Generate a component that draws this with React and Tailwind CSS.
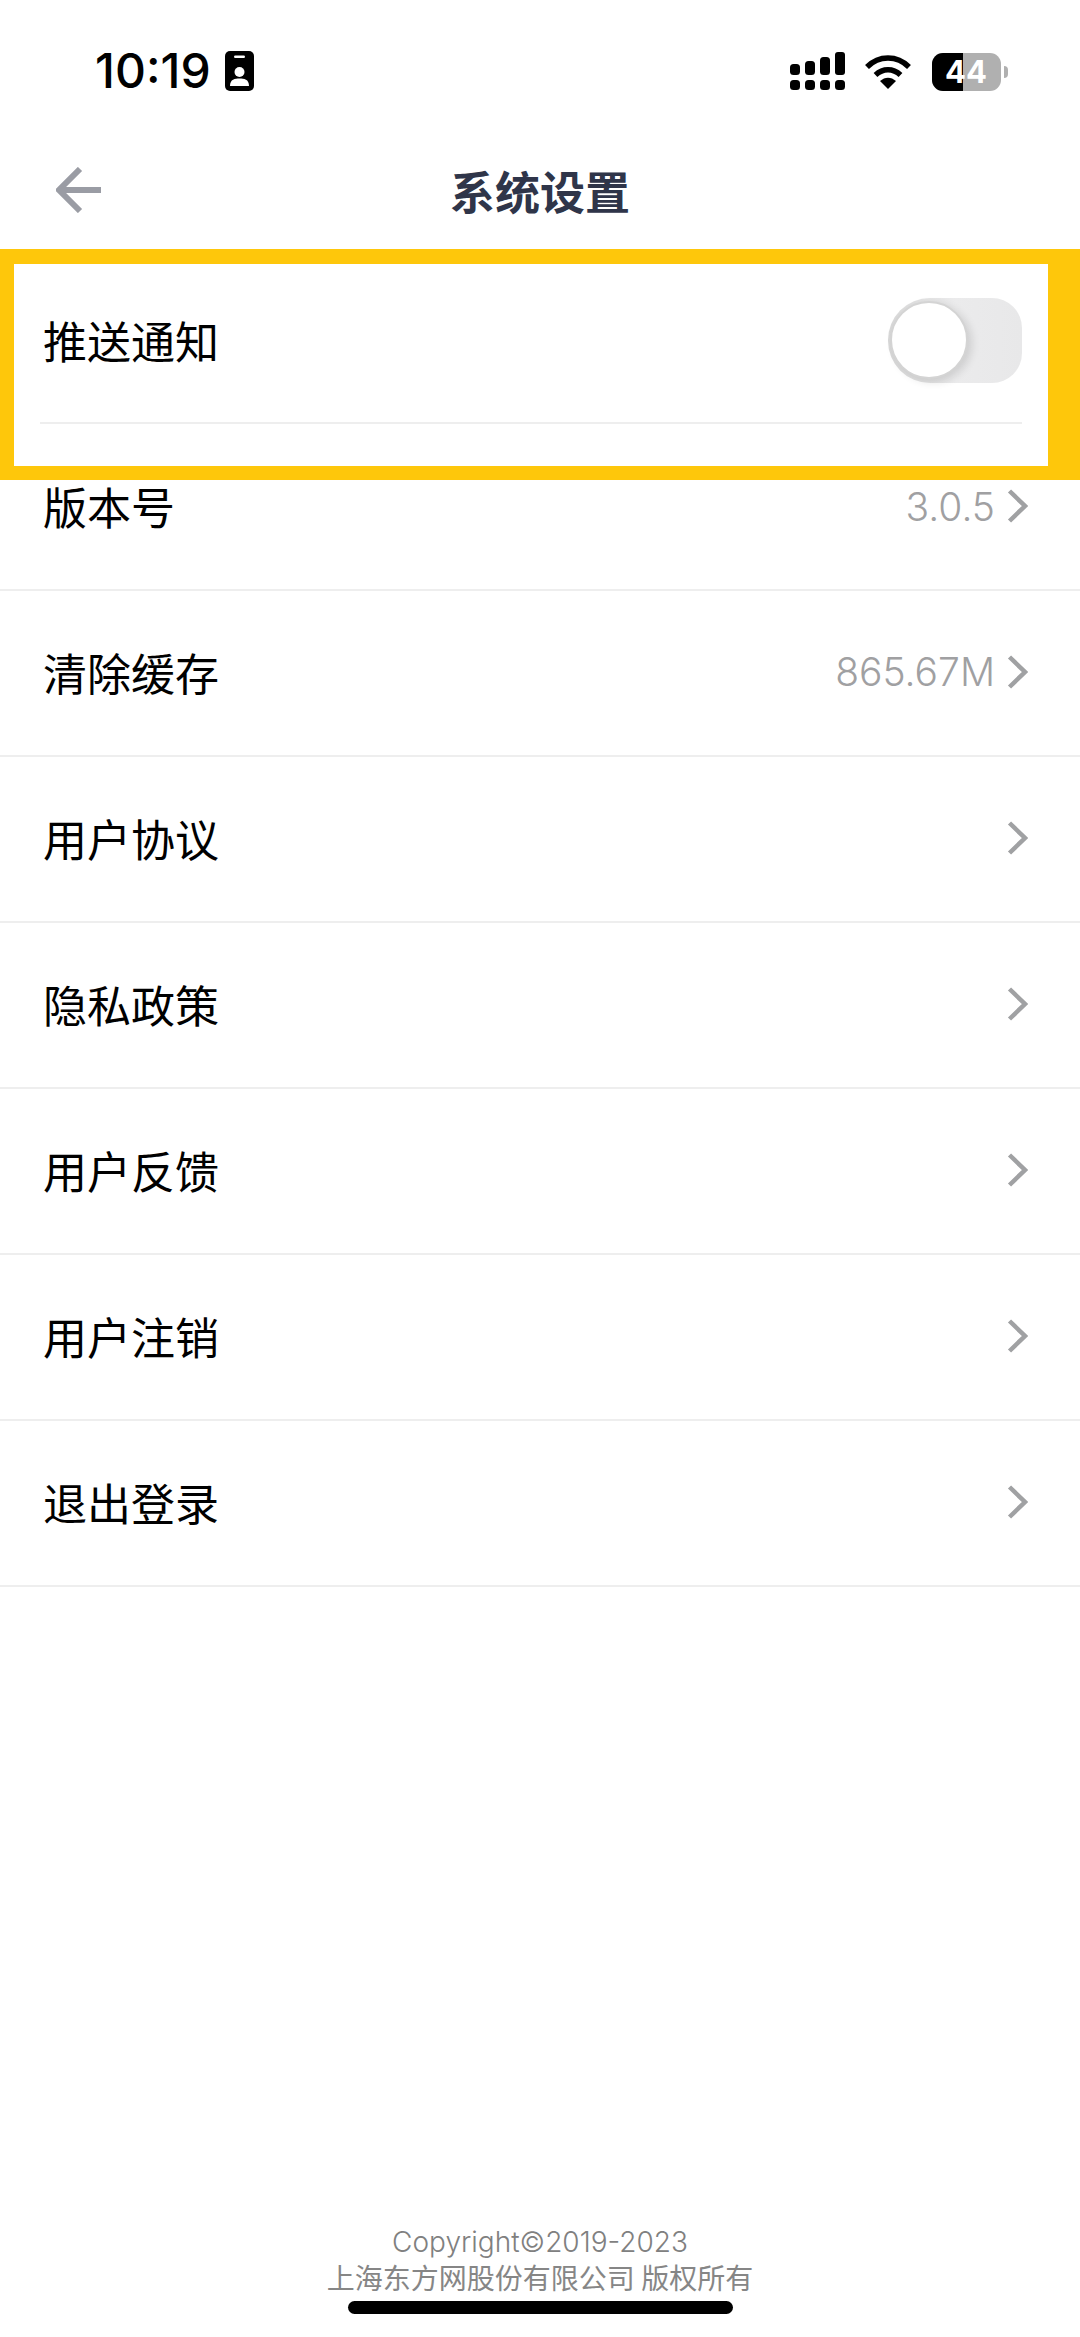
const LATIN = "font-['Inter','Noto_Sans_CJK_SC',sans-serif]";
const CJK = "font-['Noto_Sans_CJK_SC','Noto_Sans',sans-serif]";

function Chevron() {
  return (
    <svg width="21" height="34" viewBox="0 0 21 34" fill="none" className="shrink-0">
      <path d="M2.5 2 L18 17 L2.5 32" stroke="#a0a1a3" strokeWidth="4.5" />
    </svg>
  );
}

function Row({ label, value }) {
  return (
    <div className="h-[166px] flex items-center justify-between pl-[43px] pr-[52px] pb-[3px] border-b-2 border-[#eeeeee]">
      <span className={`${CJK} text-[44px] leading-none text-black`}>{label}</span>
      <div className="flex items-center gap-[12px]">
        {value && <span className={`${LATIN} text-[39px] leading-none font-light text-[#a0a0a2]`}>{value}</span>}
        <Chevron />
      </div>
    </div>
  );
}

function StatusBar() {
  return (
    <div className="h-[133px] shrink-0 flex items-start justify-between pl-[95px] pr-[72px] pt-[48px]">
      <div className="flex items-center gap-[14px]">
        <span className={`${LATIN} text-[48px] leading-[46px] font-medium text-black`}>10:19</span>
        <svg width="29" height="40" viewBox="0 0 29 40">
          <rect width="29" height="40" rx="5" fill="#000" />
          <rect x="9" y="4.5" width="11" height="2.5" rx="1.2" fill="#fff" />
          <circle cx="14.5" cy="21" r="5" fill="#fff" />
          <path d="M5 35 C5 28 10 27.5 14.5 27.5 C19 27.5 24 28 24 35 Z" fill="#fff" />
        </svg>
      </div>
      <div className="flex items-center pt-[4px]">
        <svg width="55" height="39" viewBox="0 0 55 39" fill="#000">
          <rect x="0" y="12" width="10" height="11" rx="3.5" />
          <rect x="15" y="9" width="10" height="14" rx="3.5" />
          <rect x="30" y="5" width="10" height="18" rx="3.5" />
          <rect x="45" y="0" width="10" height="23" rx="3" />
          <rect x="0" y="28" width="10" height="10" rx="3.5" />
          <rect x="15" y="28" width="10" height="10" rx="3.5" />
          <rect x="30" y="28" width="10" height="10" rx="3.5" />
          <rect x="45" y="28" width="10" height="10" rx="3.5" />
        </svg>
        <svg width="46" height="36" viewBox="0 0 46 36" fill="none" className="ml-[20px]">
          <path d="M2 13 C14 1 32 1 44 13" stroke="#000" strokeWidth="5.5" />
          <path d="M10.5 21 C18 14 28 14 35.5 21" stroke="#000" strokeWidth="5.5" />
          <path d="M15 27 L23 35 L31 27 C26 22.5 20 22.5 15 27 Z" fill="#000" />
        </svg>
        <div className="relative ml-[21px] w-[69px] h-[38px] rounded-[11px] overflow-hidden bg-[#b0b0b0]">
          <div className="w-[31px] h-full bg-black" />
          <span className="absolute inset-0 flex items-center justify-center pr-[1px] font-['Inter',sans-serif] text-[31px] leading-none font-bold text-white">44</span>
        </div>
        <div className="ml-[3px] w-[4px] h-[12px] rounded-r-full bg-[#b0b0b0]" />
      </div>
    </div>
  );
}

function Toggle() {
  return (
    <div className="relative w-[134px] h-[85px] rounded-l-[42px] rounded-r-[30px] bg-gradient-to-r from-[#d8d8d8] via-[#ebebec] to-[#e8e8e9]">
      <div className="absolute left-[2px] top-[3px] w-[78px] h-[78px] rounded-full bg-white border-2 border-[#d4d4d4] shadow-[4px_3px_8px_rgba(0,0,0,0.12)]" />
    </div>
  );
}

export default function App() {
  return (
    <div className="w-[1080px] h-[2337px] bg-white flex flex-col overflow-hidden">
      <StatusBar />

      <div className="h-[116px] shrink-0 relative flex items-center justify-center">
        <svg width="46" height="46" viewBox="0 0 46 46" fill="none" className="absolute left-[56px] top-[34px]">
          <path d="M24 2 L3 23 L24 44 M3 23 L45 23" stroke="#9a9ca4" strokeWidth="6" />
        </svg>
        <span className={`${CJK} text-[45px] leading-none font-bold text-[#2f3549] mt-[-2px]`}>系统设置</span>
      </div>

      <div className="h-[231px] shrink-0 bg-[#fec70b] pl-[14px] pr-[32px] pt-[15px] pb-[14px]">
        <div className="h-full bg-white pl-[26px] pr-[26px]">
          <div className="h-[160px] flex items-center justify-between border-b-2 border-[#eeeeee] pb-[6px]">
            <span className={`${CJK} text-[44px] leading-none text-black ml-[3px]`}>推送通知</span>
            <div>
              <Toggle />
            </div>
          </div>
        </div>
      </div>

      <div className="h-[111px] shrink-0 flex items-start justify-between pl-[43px] pr-[52px] pt-[4px] border-b-2 border-[#eeeeee]">
        <span className={`${CJK} text-[44px] leading-[44px] text-black`}>版本号</span>
        <div className="flex items-center gap-[12px] h-[44px]">
          <span className={`${LATIN} text-[39px] leading-none font-light text-[#a0a0a2]`}>3.0.5</span>
          <Chevron />
        </div>
      </div>

      <Row label="清除缓存" value="865.67M" />
      <Row label="用户协议" />
      <Row label="隐私政策" />
      <Row label="用户反馈" />
      <Row label="用户注销" />
      <Row label="退出登录" />

      <div className="flex-1 flex flex-col items-center justify-end pb-[23px]">
        <p className={`${LATIN} text-[28px] leading-[36px] font-light text-[#808080]`}>Copyright©2019-2023</p>
        <p className={`${CJK} text-[28px] leading-[35px] text-[#868686] mb-[6px]`}>上海东方网股份有限公司 版权所有</p>
        <div className="w-[385px] h-[13px] rounded-full bg-black" />
      </div>
    </div>
  );
}
